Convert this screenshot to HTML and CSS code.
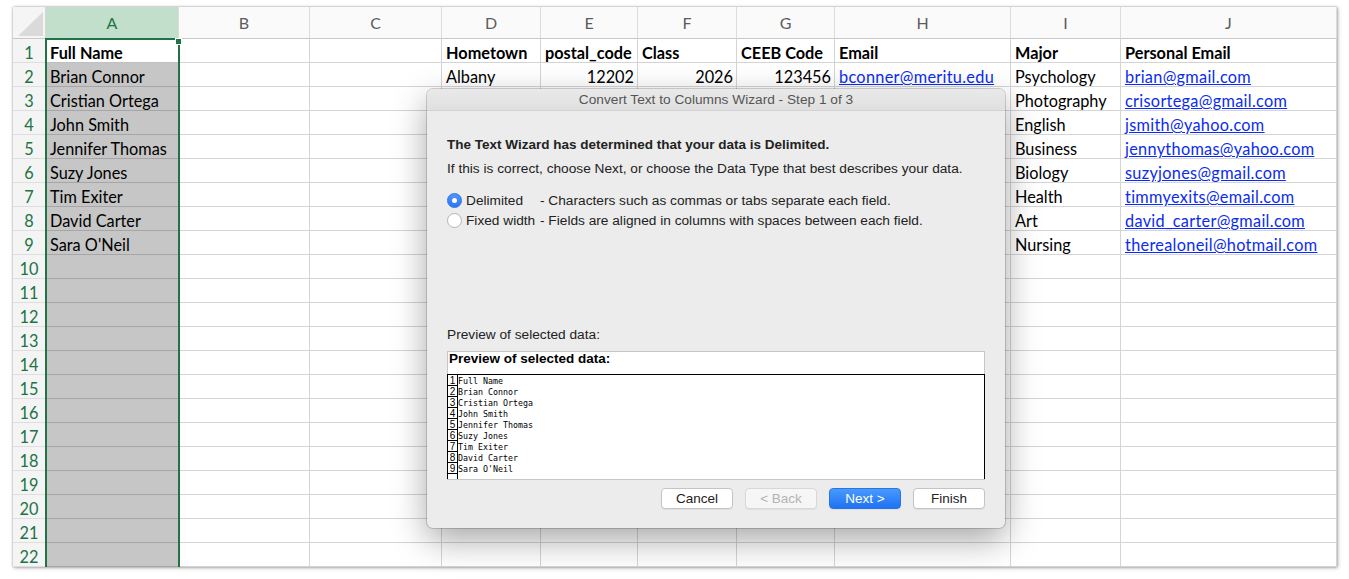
FILE: index.html
```html
<!DOCTYPE html>
<html>
<head>
<meta charset="utf-8">
<title>Convert Text to Columns</title>
<link rel="stylesheet" href="styles.css">
</head>
<body>
<div class="sheet">
  <div class="row head">
    <div class="corner"><span class="tri"></span></div>
    <div class="ch sel">A</div><div class="ch">B</div><div class="ch">C</div><div class="ch">D</div><div class="ch">E</div><div class="ch">F</div><div class="ch">G</div><div class="ch">H</div><div class="ch">I</div><div class="ch">J</div>
  </div>
  <div class="row">
    <div class="rh">1</div><div class="c a active b">Full Name</div><div class="c"></div><div class="c"></div><div class="c b">Hometown</div><div class="c b">postal_code</div><div class="c b">Class</div><div class="c b">CEEB Code</div><div class="c b">Email</div><div class="c b">Major</div><div class="c b">Personal Email</div>
  </div>
  <div class="row">
    <div class="rh">2</div><div class="c a">Brian Connor</div><div class="c"></div><div class="c"></div><div class="c">Albany</div><div class="c r">12202</div><div class="c r">2026</div><div class="c r">123456</div><div class="c"><span class="lnk">bconner@meritu.edu</span></div><div class="c">Psychology</div><div class="c"><span class="lnk">brian@gmail.com</span></div>
  </div>
  <div class="row">
    <div class="rh">3</div><div class="c a">Cristian Ortega</div><div class="c"></div><div class="c"></div><div class="c"></div><div class="c"></div><div class="c"></div><div class="c"></div><div class="c"></div><div class="c">Photography</div><div class="c"><span class="lnk">crisortega@gmail.com</span></div>
  </div>
  <div class="row">
    <div class="rh">4</div><div class="c a">John Smith</div><div class="c"></div><div class="c"></div><div class="c"></div><div class="c"></div><div class="c"></div><div class="c"></div><div class="c"></div><div class="c">English</div><div class="c"><span class="lnk">jsmith@yahoo.com</span></div>
  </div>
  <div class="row">
    <div class="rh">5</div><div class="c a">Jennifer Thomas</div><div class="c"></div><div class="c"></div><div class="c"></div><div class="c"></div><div class="c"></div><div class="c"></div><div class="c"></div><div class="c">Business</div><div class="c"><span class="lnk">jennythomas@yahoo.com</span></div>
  </div>
  <div class="row">
    <div class="rh">6</div><div class="c a">Suzy Jones</div><div class="c"></div><div class="c"></div><div class="c"></div><div class="c"></div><div class="c"></div><div class="c"></div><div class="c"></div><div class="c">Biology</div><div class="c"><span class="lnk">suzyjones@gmail.com</span></div>
  </div>
  <div class="row">
    <div class="rh">7</div><div class="c a">Tim Exiter</div><div class="c"></div><div class="c"></div><div class="c"></div><div class="c"></div><div class="c"></div><div class="c"></div><div class="c"></div><div class="c">Health</div><div class="c"><span class="lnk">timmyexits@email.com</span></div>
  </div>
  <div class="row">
    <div class="rh">8</div><div class="c a">David Carter</div><div class="c"></div><div class="c"></div><div class="c"></div><div class="c"></div><div class="c"></div><div class="c"></div><div class="c"></div><div class="c">Art</div><div class="c"><span class="lnk">david_carter@gmail.com</span></div>
  </div>
  <div class="row">
    <div class="rh">9</div><div class="c a">Sara O'Neil</div><div class="c"></div><div class="c"></div><div class="c"></div><div class="c"></div><div class="c"></div><div class="c"></div><div class="c"></div><div class="c">Nursing</div><div class="c"><span class="lnk">therealoneil@hotmail.com</span></div>
  </div>
  <div class="row"><div class="rh">10</div><div class="c a"></div><div class="c"></div><div class="c"></div><div class="c"></div><div class="c"></div><div class="c"></div><div class="c"></div><div class="c"></div><div class="c"></div><div class="c"></div></div>
  <div class="row"><div class="rh">11</div><div class="c a"></div><div class="c"></div><div class="c"></div><div class="c"></div><div class="c"></div><div class="c"></div><div class="c"></div><div class="c"></div><div class="c"></div><div class="c"></div></div>
  <div class="row"><div class="rh">12</div><div class="c a"></div><div class="c"></div><div class="c"></div><div class="c"></div><div class="c"></div><div class="c"></div><div class="c"></div><div class="c"></div><div class="c"></div><div class="c"></div></div>
  <div class="row"><div class="rh">13</div><div class="c a"></div><div class="c"></div><div class="c"></div><div class="c"></div><div class="c"></div><div class="c"></div><div class="c"></div><div class="c"></div><div class="c"></div><div class="c"></div></div>
  <div class="row"><div class="rh">14</div><div class="c a"></div><div class="c"></div><div class="c"></div><div class="c"></div><div class="c"></div><div class="c"></div><div class="c"></div><div class="c"></div><div class="c"></div><div class="c"></div></div>
  <div class="row"><div class="rh">15</div><div class="c a"></div><div class="c"></div><div class="c"></div><div class="c"></div><div class="c"></div><div class="c"></div><div class="c"></div><div class="c"></div><div class="c"></div><div class="c"></div></div>
  <div class="row"><div class="rh">16</div><div class="c a"></div><div class="c"></div><div class="c"></div><div class="c"></div><div class="c"></div><div class="c"></div><div class="c"></div><div class="c"></div><div class="c"></div><div class="c"></div></div>
  <div class="row"><div class="rh">17</div><div class="c a"></div><div class="c"></div><div class="c"></div><div class="c"></div><div class="c"></div><div class="c"></div><div class="c"></div><div class="c"></div><div class="c"></div><div class="c"></div></div>
  <div class="row"><div class="rh">18</div><div class="c a"></div><div class="c"></div><div class="c"></div><div class="c"></div><div class="c"></div><div class="c"></div><div class="c"></div><div class="c"></div><div class="c"></div><div class="c"></div></div>
  <div class="row"><div class="rh">19</div><div class="c a"></div><div class="c"></div><div class="c"></div><div class="c"></div><div class="c"></div><div class="c"></div><div class="c"></div><div class="c"></div><div class="c"></div><div class="c"></div></div>
  <div class="row"><div class="rh">20</div><div class="c a"></div><div class="c"></div><div class="c"></div><div class="c"></div><div class="c"></div><div class="c"></div><div class="c"></div><div class="c"></div><div class="c"></div><div class="c"></div></div>
  <div class="row"><div class="rh">21</div><div class="c a"></div><div class="c"></div><div class="c"></div><div class="c"></div><div class="c"></div><div class="c"></div><div class="c"></div><div class="c"></div><div class="c"></div><div class="c"></div></div>
  <div class="row"><div class="rh">22</div><div class="c a"></div><div class="c"></div><div class="c"></div><div class="c"></div><div class="c"></div><div class="c"></div><div class="c"></div><div class="c"></div><div class="c"></div><div class="c"></div></div>
  <div class="selbox"><span class="handle"></span></div>
</div>

<div class="dialog">
  <div class="title">Convert Text to Columns Wizard - Step 1 of 3</div>
  <div class="dbody">
    <p class="lead">The Text Wizard has determined that your data is Delimited.</p>
    <p class="hint">If this is correct, choose Next, or choose the Data Type that best describes your data.</p>
    <div class="radios">
      <div class="ropt"><span class="radio on"></span><span class="rlabel">Delimited</span><span class="rdesc">- Characters such as commas or tabs separate each field.</span></div>
      <div class="ropt"><span class="radio"></span><span class="rlabel">Fixed width</span><span class="rdesc">- Fields are aligned in columns with spaces between each field.</span></div>
    </div>
    <p class="plabel">Preview of selected data:</p>
    <div class="pv">
      <div class="pvh">Preview of selected data:</div>
      <div class="pvb">
        <div class="pl"><span class="pn">1</span><span class="pt">Full Name</span></div>
        <div class="pl"><span class="pn">2</span><span class="pt">Brian Connor</span></div>
        <div class="pl"><span class="pn">3</span><span class="pt">Cristian Ortega</span></div>
        <div class="pl"><span class="pn">4</span><span class="pt">John Smith</span></div>
        <div class="pl"><span class="pn">5</span><span class="pt">Jennifer Thomas</span></div>
        <div class="pl"><span class="pn">6</span><span class="pt">Suzy Jones</span></div>
        <div class="pl"><span class="pn">7</span><span class="pt">Tim Exiter</span></div>
        <div class="pl"><span class="pn">8</span><span class="pt">David Carter</span></div>
        <div class="pl"><span class="pn">9</span><span class="pt">Sara O'Neil</span></div>
        <div class="pl"><span class="pn"></span><span class="pt"></span></div>
      </div>
    </div>
    <div class="btns">
      <span class="btn">Cancel</span>
      <span class="btn dis">&lt; Back</span>
      <span class="btn primary">Next &gt;</span>
      <span class="btn">Finish</span>
    </div>
  </div>
</div>
</body>
</html>
```
FILE: styles.css
```css
* { box-sizing: border-box; }
html, body { margin: 0; padding: 0; background: #fff; }
body {
  position: relative;
  width: 1349px;
  height: 579px;
  overflow: hidden;
  font-family: "Lato", "Noto Sans", sans-serif;
}

/* ---------- spreadsheet ---------- */
.sheet {
  position: relative;
  margin: 7px 0 0 13px;
  width: 1324px;
  box-shadow: 0 0 2px rgba(0,0,0,.35), 1px 1px 4px rgba(0,0,0,.25);
  background: #fff;
}
.row {
  display: grid;
  grid-template-columns: 33px 133px 131px 132px 99px 97px 99px 98px 176px 110px 216px;
  height: 24px;
}
.row.head { height: 32px; }

.corner {
  position: relative;
  background: #f5f5f5;
  border-right: 1px solid #d6d6d6;
  border-bottom: 1px solid #c8c8c8;
}
.tri {
  position: absolute;
  right: 2px;
  bottom: 2px;
  width: 25px;
  height: 24px;
  background: #dadada;
  clip-path: polygon(100% 0, 100% 100%, 0 100%);
}
.ch {
  background: #fafafa;
  border-right: 1px solid #dcdcdc;
  border-bottom: 1px solid #c8c8c8;
  color: #5c5c5c;
  text-align: center;
  font-size: 16px;
  line-height: 31px;
}
.ch.sel { background: #c2dfcb; color: #217346; }

.rh {
  background: #f4f4f4;
  border-right: 1px solid #d4d4d4;
  border-bottom: 1px solid #dedede;
  color: #217346;
  text-align: center;
  font-size: 16.3px;
  padding-top: 2px;
  line-height: 24px;
  overflow: hidden;
}
.c {
  border-right: 1px solid #d4d4d4;
  border-bottom: 1px solid #d4d4d4;
  font-size: 16.3px;
  padding: 2px 3px 0 4px;
  line-height: 24px;
  white-space: nowrap;
  overflow: hidden;
  color: #000;
}
.c.a { background: #c6c6c6; border-bottom-color: #a6a6a6; border-right-color: #c6c6c6; }
.c.a.active { background: #fff; border-bottom-color: #c0c0c0; }
.b { font-weight: 700; }
.r { text-align: right; }
.lnk { color: #0b2cf0; text-decoration: underline; letter-spacing: 0.3px; }

.selbox {
  position: absolute;
  left: 32px;
  top: 31px;
  width: 135px;
  bottom: 0;
  border: 2px solid #217346;
  border-bottom: none;
}
.handle {
  position: absolute;
  right: -4px;
  top: -2px;
  width: 5px;
  height: 5px;
  background: #217346;
  border: 1px solid #fff;
  box-sizing: content-box;
}

/* ---------- dialog ---------- */
.dialog {
  position: absolute;
  left: 427px;
  top: 89px;
  width: 578px;
  height: 439px;
  background: #ececec;
  border-radius: 6px;
  box-shadow: 0 0 0 1px rgba(0,0,0,.16), 0 12px 34px rgba(0,0,0,.35);
  font-family: "Liberation Sans", Arial, sans-serif;
  font-size: 13.7px;
  color: #222;
  overflow: hidden;
}
.title {
  height: 22px;
  line-height: 22px;
  text-align: center;
  color: #555;
  background: linear-gradient(#e9e9e9, #e0e0e0);
  border-bottom: 1px solid #d2d2d2;
}
.dbody { padding: 26px 20px 0; }
.dbody p { margin: 0; line-height: 16px; }
.lead { font-weight: 700; font-size: 13.5px; }
.hint { margin-top: 8px !important; }
.radios { margin-top: 13px; }
.ropt { display: flex; align-items: center; height: 20px; }
.radio {
  width: 15px;
  height: 15px;
  border-radius: 50%;
  background: #fff;
  border: 1px solid #b4b4b4;
  margin-right: 4px;
  position: relative;
  flex: none;
}
.radio.on {
  background: linear-gradient(#4f95fb, #2d77f3);
  border-color: #2b72e6;
}
.radio.on::after {
  content: "";
  position: absolute;
  left: 4px;
  top: 4px;
  width: 5px;
  height: 5px;
  border-radius: 50%;
  background: #fff;
}
.rlabel { width: 74px; flex: none; }
.plabel { margin-top: 97px !important; }
.pv {
  margin-top: 8px;
  width: 538px;
  height: 129px;
  background: #fff;
  border: 1px solid #c6c6c6;
}
.pvh {
  height: 22px;
  line-height: 14px;
  padding: 0 1px;
  font-weight: 700;
  font-size: 13.5px;
  color: #000;
}
.pvb {
  margin: 0 -1px;
  height: 105px;
  border: 1px solid #000;
  border-bottom: none;
  overflow: hidden;
}
.pl { display: flex; height: 11px; }
.pn {
  width: 10px;
  flex: none;
  border-right: 1px solid #000;
  border-bottom: 1px solid #000;
  font-size: 10px;
  line-height: 11px;
  text-align: center;
  color: #000;
}
.pt {
  font-family: "DejaVu Sans Mono", monospace;
  font-size: 8.3px;
  line-height: 13px;
  color: #000;
  white-space: pre;
}
.btns {
  display: flex;
  justify-content: flex-end;
  gap: 12px;
  margin-top: 8px;
  width: 538px;
}
.btn {
  width: 72px;
  height: 21px;
  line-height: 19px;
  text-align: center;
  background: #fff;
  border: 1px solid #c4c4c4;
  border-radius: 4px;
  box-shadow: 0 1px 1px rgba(0,0,0,.06);
  color: #222;
  font-size: 13.5px;
}
.btn.dis { background: #f6f6f6; color: #b3b3b3; border-color: #d8d8d8; }
.btn.primary {
  background: linear-gradient(#489afd, #1f72f3);
  border-color: #2a74e8;
  color: #fff;
}
```
